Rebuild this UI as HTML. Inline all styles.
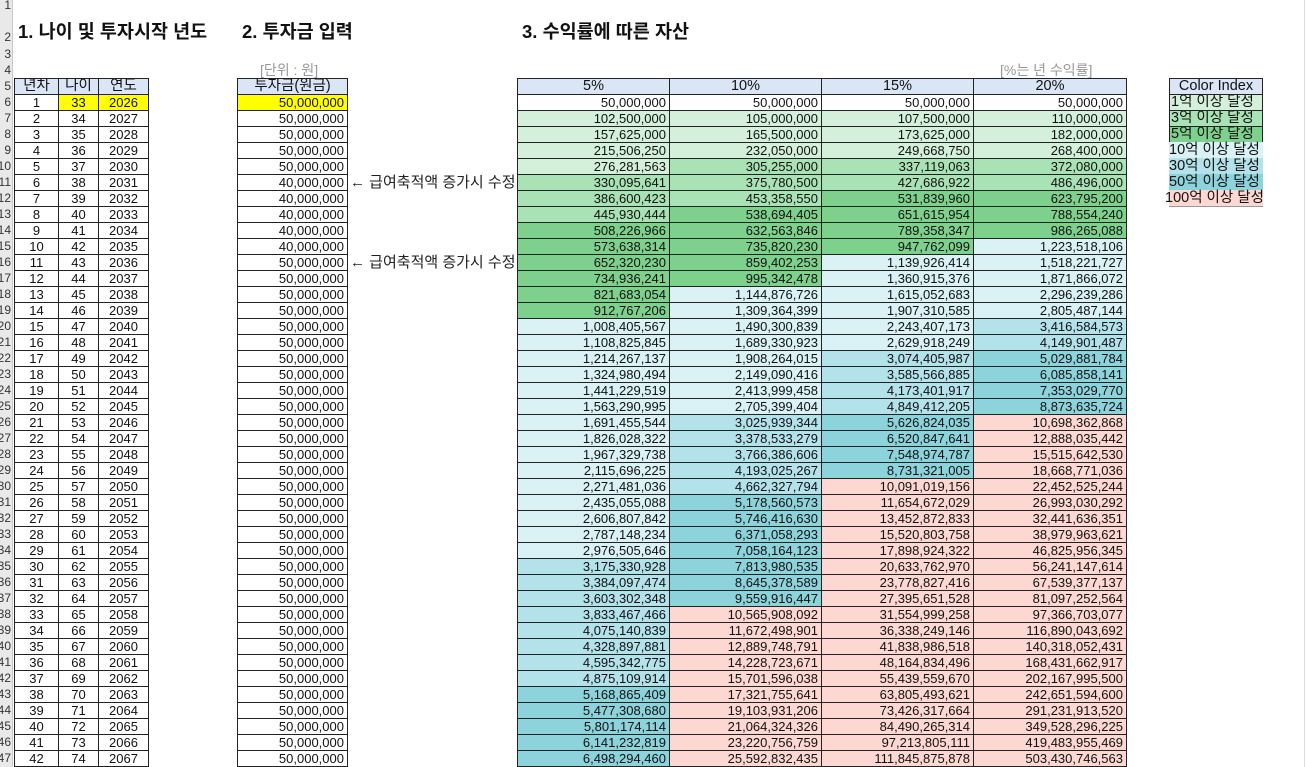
<!DOCTYPE html>
<html><head><meta charset="utf-8"><style>
body{margin:0;width:1307px;height:767px;overflow:hidden;background:#fff;position:relative;font-family:"Liberation Sans","Noto Sans CJK KR",sans-serif;font-size:13px;color:#111}
.abs{position:absolute}
table{border-collapse:collapse;table-layout:fixed;position:absolute}
td{border:1px solid #222;height:15px;line-height:15px;padding:0 3px;white-space:nowrap;overflow:hidden}
.c{text-align:center}.r{text-align:right}
.h td{background:#dae5f6;text-align:center;font-size:14.5px}
.y{background:#ffff00}
.g1{background:#d5f0da}.g2{background:#a9e2b4}.g3{background:#7dd18c}
.c1{background:#daf1f5}.c2{background:#b3e2ea}.c3{background:#8cd3dc}.p{background:#fdd7d1}
#rh{left:0;top:0;width:12px;height:767px;background:#e9e9e9;border-right:1px solid #c8c8c8;overflow:hidden}
#rh div{position:absolute;right:1px;font-size:12px;line-height:16px;color:#333;white-space:nowrap}
h1{position:absolute;margin:0;font-size:18.5px;font-weight:bold;top:18px}
.note{font-size:15px;color:#222;line-height:16px}
.gray{color:#999;font-size:14px}
.ci{font-size:14.5px}
</style></head><body>
<div id="rh" class="abs">
<div style="top:-3px">1</div><div style="top:29px">2</div><div style="top:46px">3</div><div style="top:62px">4</div>
<div style="top:78px">5</div><div style="top:94px">6</div><div style="top:110px">7</div><div style="top:126px">8</div><div style="top:142px">9</div>
<div style="top:158px">10</div><div style="top:174px">11</div><div style="top:190px">12</div><div style="top:206px">13</div><div style="top:222px">14</div>
<div style="top:238px">15</div><div style="top:254px">16</div><div style="top:270px">17</div><div style="top:286px">18</div><div style="top:302px">19</div>
<div style="top:318px">20</div><div style="top:334px">21</div><div style="top:350px">22</div><div style="top:366px">23</div><div style="top:382px">24</div>
<div style="top:398px">25</div><div style="top:414px">26</div><div style="top:430px">27</div><div style="top:446px">28</div><div style="top:462px">29</div>
<div style="top:478px">30</div><div style="top:494px">31</div><div style="top:510px">32</div><div style="top:526px">33</div><div style="top:542px">34</div>
<div style="top:558px">35</div><div style="top:574px">36</div><div style="top:590px">37</div><div style="top:606px">38</div><div style="top:622px">39</div>
<div style="top:638px">40</div><div style="top:654px">41</div><div style="top:670px">42</div><div style="top:686px">43</div><div style="top:702px">44</div>
<div style="top:718px">45</div><div style="top:734px">46</div><div style="top:750px">47</div>
</div>
<h1 style="left:18px">1. 나이 및 투자시작 년도</h1>
<h1 style="left:242px">2. 투자금 입력</h1>
<h1 style="left:522px">3. 수익률에 따른 자산</h1>
<div class="abs gray" style="left:260px;top:60px">[단위 : 원]</div>
<div class="abs gray" style="left:1000px;top:60px">[%는 년 수익률]</div>
<div class="abs note" style="left:350px;top:175px">← 급여축적액 증가시 수정</div>
<div class="abs note" style="left:350px;top:255px">← 급여축적액 증가시 수정</div>
<div class="abs" style="left:1304px;top:0;width:1px;height:767px;background:#ddd"></div>

<table style="left:14px;top:78px;width:134px">
<colgroup><col style="width:44px"><col style="width:40px"><col style="width:50px"></colgroup>
<tr class="h"><td>년차</td><td>나이</td><td>연도</td></tr>
<tr><td class="c">1</td><td class="c y">33</td><td class="c y">2026</td></tr>
<tr><td class="c">2</td><td class="c">34</td><td class="c">2027</td></tr>
<tr><td class="c">3</td><td class="c">35</td><td class="c">2028</td></tr>
<tr><td class="c">4</td><td class="c">36</td><td class="c">2029</td></tr>
<tr><td class="c">5</td><td class="c">37</td><td class="c">2030</td></tr>
<tr><td class="c">6</td><td class="c">38</td><td class="c">2031</td></tr>
<tr><td class="c">7</td><td class="c">39</td><td class="c">2032</td></tr>
<tr><td class="c">8</td><td class="c">40</td><td class="c">2033</td></tr>
<tr><td class="c">9</td><td class="c">41</td><td class="c">2034</td></tr>
<tr><td class="c">10</td><td class="c">42</td><td class="c">2035</td></tr>
<tr><td class="c">11</td><td class="c">43</td><td class="c">2036</td></tr>
<tr><td class="c">12</td><td class="c">44</td><td class="c">2037</td></tr>
<tr><td class="c">13</td><td class="c">45</td><td class="c">2038</td></tr>
<tr><td class="c">14</td><td class="c">46</td><td class="c">2039</td></tr>
<tr><td class="c">15</td><td class="c">47</td><td class="c">2040</td></tr>
<tr><td class="c">16</td><td class="c">48</td><td class="c">2041</td></tr>
<tr><td class="c">17</td><td class="c">49</td><td class="c">2042</td></tr>
<tr><td class="c">18</td><td class="c">50</td><td class="c">2043</td></tr>
<tr><td class="c">19</td><td class="c">51</td><td class="c">2044</td></tr>
<tr><td class="c">20</td><td class="c">52</td><td class="c">2045</td></tr>
<tr><td class="c">21</td><td class="c">53</td><td class="c">2046</td></tr>
<tr><td class="c">22</td><td class="c">54</td><td class="c">2047</td></tr>
<tr><td class="c">23</td><td class="c">55</td><td class="c">2048</td></tr>
<tr><td class="c">24</td><td class="c">56</td><td class="c">2049</td></tr>
<tr><td class="c">25</td><td class="c">57</td><td class="c">2050</td></tr>
<tr><td class="c">26</td><td class="c">58</td><td class="c">2051</td></tr>
<tr><td class="c">27</td><td class="c">59</td><td class="c">2052</td></tr>
<tr><td class="c">28</td><td class="c">60</td><td class="c">2053</td></tr>
<tr><td class="c">29</td><td class="c">61</td><td class="c">2054</td></tr>
<tr><td class="c">30</td><td class="c">62</td><td class="c">2055</td></tr>
<tr><td class="c">31</td><td class="c">63</td><td class="c">2056</td></tr>
<tr><td class="c">32</td><td class="c">64</td><td class="c">2057</td></tr>
<tr><td class="c">33</td><td class="c">65</td><td class="c">2058</td></tr>
<tr><td class="c">34</td><td class="c">66</td><td class="c">2059</td></tr>
<tr><td class="c">35</td><td class="c">67</td><td class="c">2060</td></tr>
<tr><td class="c">36</td><td class="c">68</td><td class="c">2061</td></tr>
<tr><td class="c">37</td><td class="c">69</td><td class="c">2062</td></tr>
<tr><td class="c">38</td><td class="c">70</td><td class="c">2063</td></tr>
<tr><td class="c">39</td><td class="c">71</td><td class="c">2064</td></tr>
<tr><td class="c">40</td><td class="c">72</td><td class="c">2065</td></tr>
<tr><td class="c">41</td><td class="c">73</td><td class="c">2066</td></tr>
<tr><td class="c">42</td><td class="c">74</td><td class="c">2067</td></tr>
</table>

<table style="left:237px;top:78px;width:111px">
<tr class="h"><td>투자금(원금)</td></tr>
<tr><td class="r y">50,000,000</td></tr>
<tr><td class="r">50,000,000</td></tr><tr><td class="r">50,000,000</td></tr><tr><td class="r">50,000,000</td></tr><tr><td class="r">50,000,000</td></tr>
<tr><td class="r">40,000,000</td></tr><tr><td class="r">40,000,000</td></tr><tr><td class="r">40,000,000</td></tr><tr><td class="r">40,000,000</td></tr><tr><td class="r">40,000,000</td></tr>
<tr><td class="r">50,000,000</td></tr><tr><td class="r">50,000,000</td></tr><tr><td class="r">50,000,000</td></tr><tr><td class="r">50,000,000</td></tr><tr><td class="r">50,000,000</td></tr>
<tr><td class="r">50,000,000</td></tr><tr><td class="r">50,000,000</td></tr><tr><td class="r">50,000,000</td></tr><tr><td class="r">50,000,000</td></tr><tr><td class="r">50,000,000</td></tr>
<tr><td class="r">50,000,000</td></tr><tr><td class="r">50,000,000</td></tr><tr><td class="r">50,000,000</td></tr><tr><td class="r">50,000,000</td></tr><tr><td class="r">50,000,000</td></tr>
<tr><td class="r">50,000,000</td></tr><tr><td class="r">50,000,000</td></tr><tr><td class="r">50,000,000</td></tr><tr><td class="r">50,000,000</td></tr><tr><td class="r">50,000,000</td></tr>
<tr><td class="r">50,000,000</td></tr><tr><td class="r">50,000,000</td></tr><tr><td class="r">50,000,000</td></tr><tr><td class="r">50,000,000</td></tr><tr><td class="r">50,000,000</td></tr>
<tr><td class="r">50,000,000</td></tr><tr><td class="r">50,000,000</td></tr><tr><td class="r">50,000,000</td></tr><tr><td class="r">50,000,000</td></tr><tr><td class="r">50,000,000</td></tr>
<tr><td class="r">50,000,000</td></tr><tr><td class="r">50,000,000</td></tr>
</table>

<table style="left:517px;top:78px;width:609px">
<colgroup><col style="width:152px"><col style="width:152px"><col style="width:152px"><col style="width:153px"></colgroup>
<tr class="h"><td>5%</td><td>10%</td><td>15%</td><td>20%</td></tr>
<tr><td class="r">50,000,000</td><td class="r">50,000,000</td><td class="r">50,000,000</td><td class="r">50,000,000</td></tr>
<tr><td class="r g1">102,500,000</td><td class="r g1">105,000,000</td><td class="r g1">107,500,000</td><td class="r g1">110,000,000</td></tr>
<tr><td class="r g1">157,625,000</td><td class="r g1">165,500,000</td><td class="r g1">173,625,000</td><td class="r g1">182,000,000</td></tr>
<tr><td class="r g1">215,506,250</td><td class="r g1">232,050,000</td><td class="r g1">249,668,750</td><td class="r g1">268,400,000</td></tr>
<tr><td class="r g1">276,281,563</td><td class="r g2">305,255,000</td><td class="r g2">337,119,063</td><td class="r g2">372,080,000</td></tr>
<tr><td class="r g2">330,095,641</td><td class="r g2">375,780,500</td><td class="r g2">427,686,922</td><td class="r g2">486,496,000</td></tr>
<tr><td class="r g2">386,600,423</td><td class="r g2">453,358,550</td><td class="r g3">531,839,960</td><td class="r g3">623,795,200</td></tr>
<tr><td class="r g2">445,930,444</td><td class="r g3">538,694,405</td><td class="r g3">651,615,954</td><td class="r g3">788,554,240</td></tr>
<tr><td class="r g3">508,226,966</td><td class="r g3">632,563,846</td><td class="r g3">789,358,347</td><td class="r g3">986,265,088</td></tr>
<tr><td class="r g3">573,638,314</td><td class="r g3">735,820,230</td><td class="r g3">947,762,099</td><td class="r c1">1,223,518,106</td></tr>
<tr><td class="r g3">652,320,230</td><td class="r g3">859,402,253</td><td class="r c1">1,139,926,414</td><td class="r c1">1,518,221,727</td></tr>
<tr><td class="r g3">734,936,241</td><td class="r g3">995,342,478</td><td class="r c1">1,360,915,376</td><td class="r c1">1,871,866,072</td></tr>
<tr><td class="r g3">821,683,054</td><td class="r c1">1,144,876,726</td><td class="r c1">1,615,052,683</td><td class="r c1">2,296,239,286</td></tr>
<tr><td class="r g3">912,767,206</td><td class="r c1">1,309,364,399</td><td class="r c1">1,907,310,585</td><td class="r c1">2,805,487,144</td></tr>
<tr><td class="r c1">1,008,405,567</td><td class="r c1">1,490,300,839</td><td class="r c1">2,243,407,173</td><td class="r c2">3,416,584,573</td></tr>
<tr><td class="r c1">1,108,825,845</td><td class="r c1">1,689,330,923</td><td class="r c1">2,629,918,249</td><td class="r c2">4,149,901,487</td></tr>
<tr><td class="r c1">1,214,267,137</td><td class="r c1">1,908,264,015</td><td class="r c2">3,074,405,987</td><td class="r c3">5,029,881,784</td></tr>
<tr><td class="r c1">1,324,980,494</td><td class="r c1">2,149,090,416</td><td class="r c2">3,585,566,885</td><td class="r c3">6,085,858,141</td></tr>
<tr><td class="r c1">1,441,229,519</td><td class="r c1">2,413,999,458</td><td class="r c2">4,173,401,917</td><td class="r c3">7,353,029,770</td></tr>
<tr><td class="r c1">1,563,290,995</td><td class="r c1">2,705,399,404</td><td class="r c2">4,849,412,205</td><td class="r c3">8,873,635,724</td></tr>
<tr><td class="r c1">1,691,455,544</td><td class="r c2">3,025,939,344</td><td class="r c3">5,626,824,035</td><td class="r p">10,698,362,868</td></tr>
<tr><td class="r c1">1,826,028,322</td><td class="r c2">3,378,533,279</td><td class="r c3">6,520,847,641</td><td class="r p">12,888,035,442</td></tr>
<tr><td class="r c1">1,967,329,738</td><td class="r c2">3,766,386,606</td><td class="r c3">7,548,974,787</td><td class="r p">15,515,642,530</td></tr>
<tr><td class="r c1">2,115,696,225</td><td class="r c2">4,193,025,267</td><td class="r c3">8,731,321,005</td><td class="r p">18,668,771,036</td></tr>
<tr><td class="r c1">2,271,481,036</td><td class="r c2">4,662,327,794</td><td class="r p">10,091,019,156</td><td class="r p">22,452,525,244</td></tr>
<tr><td class="r c1">2,435,055,088</td><td class="r c3">5,178,560,573</td><td class="r p">11,654,672,029</td><td class="r p">26,993,030,292</td></tr>
<tr><td class="r c1">2,606,807,842</td><td class="r c3">5,746,416,630</td><td class="r p">13,452,872,833</td><td class="r p">32,441,636,351</td></tr>
<tr><td class="r c1">2,787,148,234</td><td class="r c3">6,371,058,293</td><td class="r p">15,520,803,758</td><td class="r p">38,979,963,621</td></tr>
<tr><td class="r c1">2,976,505,646</td><td class="r c3">7,058,164,123</td><td class="r p">17,898,924,322</td><td class="r p">46,825,956,345</td></tr>
<tr><td class="r c2">3,175,330,928</td><td class="r c3">7,813,980,535</td><td class="r p">20,633,762,970</td><td class="r p">56,241,147,614</td></tr>
<tr><td class="r c2">3,384,097,474</td><td class="r c3">8,645,378,589</td><td class="r p">23,778,827,416</td><td class="r p">67,539,377,137</td></tr>
<tr><td class="r c2">3,603,302,348</td><td class="r c3">9,559,916,447</td><td class="r p">27,395,651,528</td><td class="r p">81,097,252,564</td></tr>
<tr><td class="r c2">3,833,467,466</td><td class="r p">10,565,908,092</td><td class="r p">31,554,999,258</td><td class="r p">97,366,703,077</td></tr>
<tr><td class="r c2">4,075,140,839</td><td class="r p">11,672,498,901</td><td class="r p">36,338,249,146</td><td class="r p">116,890,043,692</td></tr>
<tr><td class="r c2">4,328,897,881</td><td class="r p">12,889,748,791</td><td class="r p">41,838,986,518</td><td class="r p">140,318,052,431</td></tr>
<tr><td class="r c2">4,595,342,775</td><td class="r p">14,228,723,671</td><td class="r p">48,164,834,496</td><td class="r p">168,431,662,917</td></tr>
<tr><td class="r c2">4,875,109,914</td><td class="r p">15,701,596,038</td><td class="r p">55,439,559,670</td><td class="r p">202,167,995,500</td></tr>
<tr><td class="r c3">5,168,865,409</td><td class="r p">17,321,755,641</td><td class="r p">63,805,493,621</td><td class="r p">242,651,594,600</td></tr>
<tr><td class="r c3">5,477,308,680</td><td class="r p">19,103,931,206</td><td class="r p">73,426,317,664</td><td class="r p">291,231,913,520</td></tr>
<tr><td class="r c3">5,801,174,114</td><td class="r p">21,064,324,326</td><td class="r p">84,490,265,314</td><td class="r p">349,528,296,225</td></tr>
<tr><td class="r c3">6,141,232,819</td><td class="r p">23,220,756,759</td><td class="r p">97,213,805,111</td><td class="r p">419,483,955,469</td></tr>
<tr><td class="r c3">6,498,294,460</td><td class="r p">25,592,832,435</td><td class="r p">111,845,875,878</td><td class="r p">503,430,746,563</td></tr>
</table>

<table style="left:1169px;top:78px;width:94px">
<tr class="h"><td>Color Index</td></tr>
<tr><td class="g1 ci" style="padding:0 1px">1억 이상 달성</td></tr>
<tr><td class="g2 ci" style="padding:0 1px">3억 이상 달성</td></tr>
<tr><td class="g3 ci" style="padding:0 1px">5억 이상 달성</td></tr>
</table>
<div class="abs c1 ci" style="left:1169px;top:142px;width:94px;height:16px;line-height:16px;white-space:nowrap">10억 이상 달성</div>
<div class="abs c2 ci" style="left:1169px;top:158px;width:94px;height:16px;line-height:16px;white-space:nowrap">30억 이상 달성</div>
<div class="abs c3 ci" style="left:1169px;top:174px;width:94px;height:16px;line-height:16px;white-space:nowrap">50억 이상 달성</div>
<div class="abs p ci" style="left:1169px;top:190px;width:94px;height:16px;line-height:16px;white-space:nowrap;border-bottom:1px solid #999"><span style="position:relative;left:-4px">100억 이상 달성</span></div>
</body></html>
